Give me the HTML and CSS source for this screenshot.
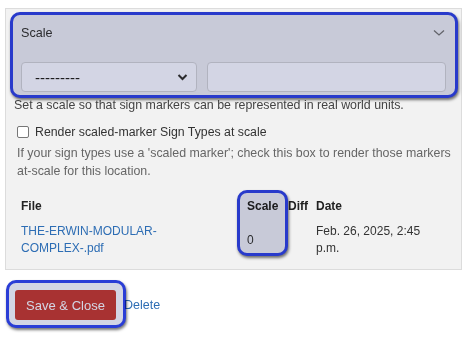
FILE: index.html
```html
<!DOCTYPE html>
<html>
<head>
<meta charset="utf-8">
<link rel="stylesheet" href="styles.css">
</head>
<body>
<div class="panel">
  <div class="summary">
    <span class="summary-label">Scale</span>
    <svg class="summary-chev" width="12" height="8" viewBox="0 0 12 8"><path d="M1 1.5 L6 6 L11 1.5" fill="none" stroke="#777" stroke-width="1.3"/></svg>
  </div>
  <div class="fields">
    <div class="select">
      <span>---------</span>
      <svg width="11" height="8" viewBox="0 0 11 8"><path d="M1.5 2 L5.5 6 L9.5 2" fill="none" stroke="#333" stroke-width="2"/></svg>
    </div>
    <div class="input"></div>
  </div>
  <p class="help1">Set a scale so that sign markers can be represented in real world units.</p>
  <label class="check">
    <span class="box"></span>
    <span>Render scaled-marker Sign Types at scale</span>
  </label>
  <p class="help2">If your sign types use a 'scaled marker'; check this box to render those markers at-scale for this location.</p>
  <div class="table">
    <div class="th">File</div>
    <div class="th">Scale</div>
    <div class="th">Diff</div>
    <div class="th">Date</div>
    <div class="td td-file"><a class="link" href="#">THE-ERWIN-MODULAR-COMPLEX-.pdf</a></div>
    <div class="td td-mid">0</div>
    <div class="td"></div>
    <div class="td td-date">Feb. 26, 2025, 2:45 p.m.</div>
  </div>
</div>
<div class="actions">
  <button class="btn">Save &amp; Close</button>
  <a class="delete" href="#">Delete</a>
</div>
<div class="hl hl-top"></div>
<div class="hl hl-scale"></div>
<div class="hl hl-btn"></div>
</body>
</html>
```
FILE: styles.css
```css
* { box-sizing: border-box; }
body {
  margin: 0;
  width: 468px;
  height: 352px;
  background: #fff;
  font-family: "Liberation Sans", Arial, sans-serif;
  font-size: 12px;
  color: #333;
  position: relative;
  overflow: hidden;
}
.panel {
  margin: 8px 6px 0 5px;
  height: 262px;
  background: #f2f2f2;
  border: 1px solid #dcdcdc;
}
.summary {
  display: flex;
  justify-content: space-between;
  align-items: center;
  padding: 12px 16px 0 15px;
  height: 36px;
}
.summary-label { font-size: 12.6px; color: #333; line-height: 24px; }
.fields {
  display: flex;
  gap: 10px;
  margin-top: 17px;
  padding: 0 15px;
}
.select {
  width: 176px;
  height: 30px;
  background: #fff;
  border: 1px solid #d6d6d6;
  border-radius: 4px;
  display: flex;
  align-items: center;
  justify-content: space-between;
  padding: 0 8px 0 13px;
  font-size: 15px;
  color: #222;
}
.input {
  flex: 1;
  height: 30px;
  background: #fff;
  border: 1px solid #d6d6d6;
  border-radius: 4px;
}
.help1 {
  margin: 6px 0 0 8px;
  font-size: 12.4px;
  line-height: 14px;
  color: #444;
}
.check {
  display: flex;
  align-items: center;
  margin: 12px 0 0 11px;
  font-size: 12.3px;
  color: #333;
  line-height: 16px;
}
.box {
  width: 12px;
  height: 12px;
  border: 1px solid #777;
  border-radius: 2px;
  background: #fff;
  margin-right: 6px;
  flex: none;
}
.help2 {
  margin: 4px 6px 0 11px;
  font-size: 12.4px;
  line-height: 18px;
  color: #666;
}
.table {
  display: grid;
  grid-template-columns: 226px 41px 28px 1fr;
  margin: 18px 0 0 15px;
  row-gap: 9px;
}
.th {
  font-weight: bold;
  font-size: 12px;
  color: #222;
  line-height: 16px;
}
.td {
  font-size: 12px;
  line-height: 17px;
  color: #333;
}
.td-file { padding-right: 60px; }
.td-date { padding-right: 20px; }
.td-mid { align-self: center; }
.link { color: #2d6db4; text-decoration: none; }
.actions {
  display: flex;
  align-items: center;
  margin: 20px 0 0 15px;
  gap: 8px;
}
.btn {
  width: 101px;
  height: 30px;
  background: #cb3c38;
  color: #fff;
  border: none;
  border-radius: 3px;
  font-family: "Liberation Sans", Arial, sans-serif;
  font-size: 13px;
  padding: 0;
}
.delete {
  color: #2d6db4;
  text-decoration: none;
  font-size: 12.5px;
}
.hl {
  position: absolute;
  border: 3px solid #2a3dd6;
  border-radius: 10px;
  background: rgb(211, 213, 228);
  mix-blend-mode: multiply;
  box-shadow: 1px 2px 3px rgba(0, 0, 0, 0.55);
}
.hl-top { left: 10px; top: 12px; width: 448px; height: 86px; }
.hl-scale { left: 237px; top: 190px; width: 51px; height: 66px; }
.hl-btn { left: 6px; top: 280px; width: 120px; height: 48px; }
```
